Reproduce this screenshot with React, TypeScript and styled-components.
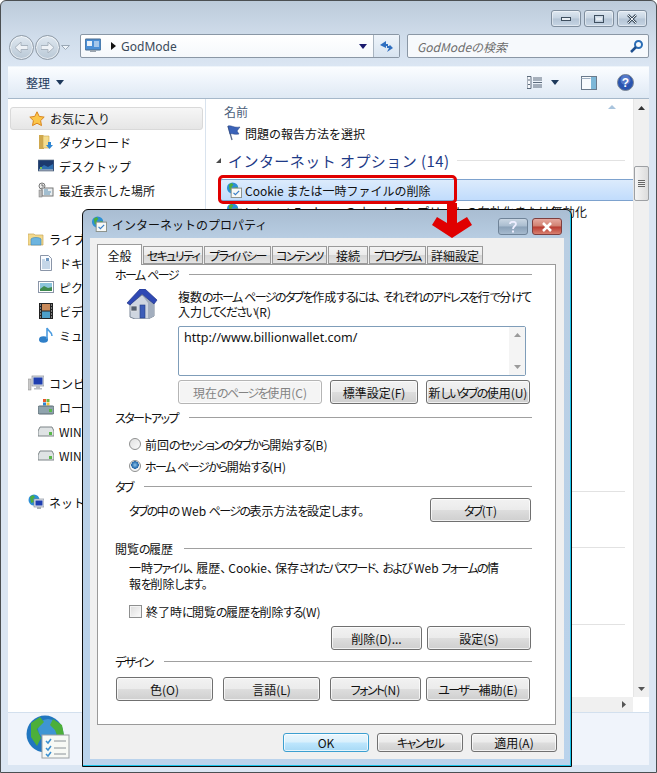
import React from 'react';
import styled, { createGlobalStyle } from 'styled-components';

const GlobalStyle = createGlobalStyle`
  html, body { margin: 0; padding: 0; background: #fff; }
  body { font-family: "Noto Sans CJK JP", "Liberation Sans", sans-serif; font-size: 12px; color: #111; }
`;

const Page = styled.div`
  position: relative;
  width: 657px;
  height: 773px;
  overflow: hidden;
`;

const ExplorerWindow = styled.div`
  box-sizing: border-box;
  width: 657px;
  height: 773px;
  border: 1px solid #4b4f52;
  border-radius: 6px 6px 0 0;
  padding: 0 7px 7px;
  display: flex;
  flex-direction: column;
  background: linear-gradient(#bccbda 0, #cfdcea 34px, #dbe6f3 66px, #dbe6f3 100%);
`;

const TitleBar = styled.div`
  height: 33px;
  flex: none;
  display: flex;
  justify-content: flex-end;
  gap: 3px;
  padding: 9px 2px 0 0;
  box-sizing: border-box;
`;

const CaptionButton = styled.div`
  width: 30px;
  height: 17px;
  box-sizing: border-box;
  border: 1px solid #7f8e9e;
  border-radius: 3px;
  display: flex;
  align-items: center;
  justify-content: center;
  background: linear-gradient(#dfe8f1 0, #c6d4e2 48%, #b4c4d5 52%, #c6d5e4 100%);
  box-shadow: inset 0 0 0 1px rgba(255, 255, 255, 0.45);
`;

const NavRow = styled.div`
  height: 32px;
  flex: none;
  display: flex;
  align-items: flex-start;
`;

const NavGroup = styled.div`
  width: 71px;
  margin-left: 1px;
  display: flex;
  align-items: center;
  height: 26px;
  gap: 1px;
`;

const NavCircle = styled.div`
  width: 25px;
  height: 25px;
  box-sizing: border-box;
  border-radius: 50%;
  border: 1px solid #8e9aa6;
  background: linear-gradient(#dfe8f0, #b9c8d6);
  box-shadow: inset 0 0 0 1px rgba(255, 255, 255, 0.6);
  display: flex;
  align-items: center;
  justify-content: center;
  flex: none;
`;

const AddressBar = styled.div`
  width: 320px;
  height: 24px;
  box-sizing: border-box;
  border: 1px solid #8a97a5;
  border-radius: 2px;
  background: linear-gradient(#fff, #f4f8fb);
  display: flex;
  align-items: center;
  padding-left: 4px;
  color: #3a4a5a;
`;

const AddressArrow = styled.span`
  margin-left: 10px;
  display: flex;
`;

const AddressText = styled.span`
  flex: 1;
  margin-left: 5px;
  font-size: 12px;
  font-family: "Noto Sans", sans-serif;
`;

const AddressEnd = styled.div`
  width: 25px;
  height: 100%;
  margin-left: 6px;
  border-left: 1px solid #a8b4c0;
  display: flex;
  align-items: center;
  justify-content: center;
  background: linear-gradient(#eef4fa, #d8e4f0);
`;

const SearchBox = styled.div`
  width: 242px;
  height: 24px;
  box-sizing: border-box;
  margin-left: 7px;
  border: 1px solid #8a97a5;
  border-radius: 2px;
  background: #f6f9fc;
  display: flex;
  align-items: center;
  justify-content: space-between;
  padding: 0 4px 0 9px;
  color: #6d6d6d;
  font-style: italic;
`;

const Toolbar = styled.div`
  height: 33px;
  flex: none;
  box-sizing: border-box;
  border-top: 1px solid #eef4fa;
  border-bottom: 1px solid #a6b8ca;
  background: linear-gradient(#fbfdff 0, #eef4fb 45%, #dfe9f4 100%);
  display: flex;
  align-items: center;
  padding: 0 15px 0 18px;
  color: #1e395b;
`;

const ToolLabel = styled.span`
  display: flex;
  align-items: center;
  gap: 6px;
  margin-right: auto;
`;

const ToolIcons = styled.div`
  display: flex;
  align-items: center;
`;

const ToolGap = styled.span<{ $w: number }>`
  width: ${p => p.$w}px;
`;

const Body = styled.div`
  flex: 1;
  min-height: 0;
  display: flex;
  background: #fff;
`;

const Sidebar = styled.div`
  width: 198px;
  flex: none;
  box-sizing: border-box;
  border-right: 1px solid #d9e3ee;
  padding: 8px 2px 0 2px;
  display: flex;
  flex-direction: column;
`;

const NavItem = styled.div<{ $sub?: boolean; $top?: number; $active?: boolean }>`
  height: ${p => (p.$active ? 23 : 24)}px;
  flex: none;
  box-sizing: border-box;
  display: flex;
  align-items: center;
  gap: 5px;
  white-space: nowrap;
  padding-left: ${p => (p.$sub ? 28 : 18)}px;
  margin-top: ${p => p.$top ?? 0}px;
  ${p =>
    p.$active
      ? `border: 1px solid #d9d9d9; border-radius: 3px; background: linear-gradient(#f6f6f6, #e6e6e6);`
      : ''}
`;

const NavIconBox = styled.span`
  width: 16px;
  height: 16px;
  flex: none;
  display: flex;
`;

const ListColumn = styled.div`
  flex: 1;
  min-width: 0;
  display: flex;
  flex-direction: column;
`;

const ListRowArea = styled.div`
  flex: 1;
  min-height: 0;
  display: flex;
`;

const List = styled.div`
  position: relative;
  flex: 1;
  min-width: 0;
  display: flex;
  flex-direction: column;
  padding-top: 5px;
`;

const SortMark = styled.div`
  position: absolute;
  top: 6px;
  left: 402px;
  width: 0;
  height: 0;
  border-left: 4px solid transparent;
  border-right: 4px solid transparent;
  border-bottom: 4px solid #a9c4dd;
`;

const ColumnHead = styled.div`
  height: 16px;
  padding-left: 18px;
  color: #4c607a;
  line-height: 16px;
`;

const FileRow = styled.div<{ $selected?: boolean; $top?: number }>`
  height: 22px;
  flex: none;
  box-sizing: border-box;
  margin: ${p => p.$top ?? 0}px 0 0 14px;
  padding-left: ${p => (p.$selected ? 5 : 6)}px;
  display: flex;
  align-items: center;
  gap: 3px;
  white-space: nowrap;
  ${p =>
    p.$selected
      ? `background: linear-gradient(#dcebfc, #c1dcfc); border: 1px solid #7da2ce; border-right: 0; border-radius: 2px 0 0 2px;`
      : ''}
`;

const WideText = styled.span`
  letter-spacing: 0.15px;
`;

const GroupHead = styled.div`
  display: flex;
  align-items: center;
  height: 22px;
  margin-top: 5px;
  padding-left: 10px;
  color: #1e3a87;
  font-size: 15px;
  letter-spacing: 0.45px;
  white-space: nowrap;
`;

const GroupArrow = styled.span`
  width: 0;
  height: 0;
  border-left: 5px solid transparent;
  border-bottom: 5px solid #4a4a4a;
  margin-right: 7px;
`;

const GroupLine = styled.span`
  flex: 1;
  height: 1px;
  background: #e2e2e2;
  margin: 0 8px 0 7px;
`;

const Divider = styled.div<{ $top: number }>`
  height: 1px;
  flex: none;
  background: #e2e2e2;
  margin: ${p => p.$top}px 8px 0 18px;
`;

const VScroll = styled.div`
  width: 16px;
  flex: none;
  background: #f0f0f0;
  display: flex;
  flex-direction: column;
  align-items: center;
  border-left: 1px solid #e6e6e6;
  box-sizing: border-box;
`;

const ScrollArrow = styled.div`
  height: 17px;
  flex: none;
  display: flex;
  align-items: center;
  justify-content: center;
`;

const Thumb = styled.div`
  width: 15px;
  height: 35px;
  margin-top: 50px;
  box-sizing: border-box;
  border: 1px solid #9da0a4;
  border-radius: 2px;
  background: linear-gradient(90deg, #f5f5f5, #dcdcdc);
  display: flex;
  align-items: center;
  justify-content: center;
`;

const Grip = styled.div`
  width: 7px;
  height: 7px;
  background: repeating-linear-gradient(#666 0 1px, #eee 1px 2px);
`;

const ScrollFill = styled.div`
  flex: 1;
`;

const HScroll = styled.div`
  height: 15px;
  flex: none;
  display: flex;
`;

const HTrack = styled.div`
  flex: 1;
  background: #f0f0f0;
  display: flex;
  align-items: center;
  justify-content: flex-end;
  padding-right: 7px;
`;

const ScrollCorner = styled.div`
  width: 16px;
  background: #fff;
`;

const DetailsPane = styled.div`
  height: 53px;
  flex: none;
  box-sizing: border-box;
  border-top: 1px solid #d3e0ee;
  background: #f0f4fb;
  padding: 2px 0 0 18px;
`;

const Highlight = styled.div`
  position: absolute;
  left: 218px;
  top: 175px;
  width: 239px;
  height: 29px;
  box-sizing: border-box;
  border: 3px solid #e00000;
  border-radius: 5px;
`;

const ArrowMark = styled.svg`
  position: absolute;
  left: 431px;
  top: 203px;
  z-index: 3;
`;

/* internet properties dialog */
const Dialog = styled.div`
  position: absolute;
  left: 82px;
  top: 209px;
  z-index: 2;
  width: 490px;
  height: 558px;
  box-sizing: border-box;
  border: 1px solid #0c0c0c;
  border-radius: 6px 6px 0 0;
  padding: 0 7px 7px;
  display: flex;
  flex-direction: column;
  background: linear-gradient(#a9bdd2 0, #b9cee3 30px, #bad3ec 100%);
  box-shadow: inset -1px -1px 0 #19c4ea;
`;

const DialogTitle = styled.div`
  height: 28px;
  flex: none;
  display: flex;
  align-items: center;
  gap: 5px;
  padding-left: 1px;
`;

const DialogTitleText = styled.span`
  flex: 1;
  font-size: 12px;
  margin-top: 1px;
`;

const DialogCaption = styled.div<{ $close?: boolean }>`
  width: 30px;
  height: 17px;
  align-self: flex-start;
  margin-top: 8px;
  margin-right: ${p => (p.$close ? 2 : -1)}px;
  box-sizing: border-box;
  border: 1px solid ${p => (p.$close ? '#7e3f3f' : '#6f8398')};
  border-radius: 3px;
  display: flex;
  align-items: center;
  justify-content: center;
  background: ${p =>
    p.$close
      ? 'linear-gradient(#e6a9a0 0, #d08070 48%, #b83a30 52%, #d88070 100%)'
      : 'linear-gradient(#c9d6e3 0, #a9bccf 48%, #8aa1b8 52%, #a6bace 100%)'};
`;

const Client = styled.div`
  flex: 1;
  min-height: 0;
  background: #f0f0f0;
  padding: 6px 8px 0 7px;
  display: flex;
  flex-direction: column;
`;

const TabStrip = styled.div`
  display: flex;
  height: 20px;
  flex: none;
  align-items: flex-end;
  position: relative;
  z-index: 1;
  gap: 1px;
`;

const Tab = styled.div<{ $w: number; $active?: boolean }>`
  width: ${p => p.$w}px;
  height: ${p => (p.$active ? 21 : 18)}px;
  margin-bottom: ${p => (p.$active ? -1 : 0)}px;
  box-sizing: border-box;
  border: 1px solid #9a9a9a;
  border-bottom: ${p => (p.$active ? 0 : '1px solid #9a9a9a')};
  background: ${p => (p.$active ? '#fff' : 'linear-gradient(#f3f3f3 0, #ebebeb 48%, #d6d6d6 52%, #e2e2e2 100%)')};
  display: flex;
  align-items: center;
  justify-content: center;
  white-space: nowrap;
  font-size: 12px;
`;

const Panel = styled.div`
  height: 461px;
  flex: none;
  box-sizing: border-box;
  border: 1px solid #9a9a9a;
  background: #fff;
  padding: 1px 24px 0 18px;
  display: flex;
  flex-direction: column;
`;

const Kana = styled.span`
  letter-spacing: -1.6px;
  font-feature-settings: "palt";
`;

const Punct = styled.span`
  letter-spacing: -4px;
`;

const SectionHead = styled.div<{ $top?: number }>`
  height: 16px;
  flex: none;
  margin: ${p => p.$top ?? 0}px -1px 0;
  display: flex;
  align-items: center;
  gap: 11px;
  white-space: nowrap;
  &::after {
    content: '';
    flex: 1;
    height: 1px;
    background: #a0a0a0;
  }
`;

const HomeRow = styled.div`
  display: flex;
  margin-top: 7px;
`;

const HouseBox = styled.div`
  width: 62px;
  flex: none;
  padding-left: 10px;
  box-sizing: border-box;
`;

const HomeColumn = styled.div`
  flex: 1;
  min-width: 0;
  display: flex;
  flex-direction: column;
`;

const HelpLine = styled.div<{ $indent?: boolean }>`
  line-height: ${p => (p.$indent ? 16 : 15)}px;
  padding-left: ${p => (p.$indent ? 13 : 0)}px;
  white-space: nowrap;
`;

const HelpBlock = styled.div<{ $top?: number }>`
  margin-top: ${p => p.$top ?? 0}px;
`;

const UrlBox = styled.div`
  height: 50px;
  width: 348px;
  margin-top: 7px;
  box-sizing: border-box;
  border: 1px solid #7f9db9;
  border-radius: 2px;
  padding: 2px 0 0 5px;
  display: flex;
  justify-content: space-between;
  font-family: "Noto Sans", sans-serif;
  font-size: 12.5px;
  line-height: 17px;
`;

const UrlScroll = styled.div`
  width: 16px;
  background: #f4f4f4;
  margin-top: -2px;
  display: flex;
  flex-direction: column;
  justify-content: space-between;
  align-items: center;
  padding: 6px 0;
  box-sizing: border-box;
`;

const ButtonRow = styled.div<{ $top?: number; $end?: boolean; $gap?: number }>`
  display: flex;
  justify-content: ${p => (p.$end ? 'flex-end' : 'flex-start')};
  gap: ${p => p.$gap ?? 8}px;
  margin-top: ${p => p.$top ?? 0}px;
`;

const PushButton = styled.div<{ $w: number; $disabled?: boolean; $default?: boolean; $short?: boolean }>`
  width: ${p => p.$w}px;
  height: ${p => (p.$short ? 19 : 24)}px;
  flex: none;
  box-sizing: border-box;
  border: 1px solid ${p => (p.$disabled ? '#b5b5b5' : p.$default ? '#3c9fd0' : '#707070')};
  border-radius: 3px;
  display: flex;
  align-items: center;
  justify-content: center;
  white-space: pre;
  color: ${p => (p.$disabled ? '#838383' : '#111')};
  background: ${p =>
    p.$disabled
      ? '#f4f4f4'
      : p.$default
      ? 'linear-gradient(#eaf6fd 0, #d9f0fc 48%, #bee6fd 52%, #a7d9f5 100%)'
      : 'linear-gradient(#f2f2f2 0, #ebebeb 48%, #dddddd 52%, #cfcfcf 100%)'};
  box-shadow: inset 0 0 0 1px rgba(255, 255, 255, 0.7);
`;

const OptionRow = styled.div<{ $top?: number; $h?: number }>`
  height: ${p => p.$h ?? 22}px;
  margin-top: ${p => p.$top ?? 0}px;
  padding-left: 13px;
  display: flex;
  align-items: center;
  gap: 4px;
  white-space: nowrap;
`;

const Radio = styled.span<{ $on?: boolean }>`
  width: 12px;
  height: 12px;
  box-sizing: border-box;
  border-radius: 50%;
  border: 1px solid #8e8f8f;
  background: ${p =>
    p.$on
      ? 'radial-gradient(circle at 50% 40%, #8fc4ea 0, #1e64a8 3.5px, #f4f4f4 4px)'
      : 'linear-gradient(135deg, #e0e0e0, #fbfbfb)'};
`;

const CheckBox = styled.span`
  width: 13px;
  height: 13px;
  box-sizing: border-box;
  border: 1px solid #8e8f8f;
  background: linear-gradient(135deg, #dcdcdc, #fdfdfd);
  box-shadow: inset 0 0 0 1px #f4f4f4;
`;

const TabInfoRow = styled.div`
  display: flex;
  align-items: center;
  justify-content: space-between;
  margin-top: 4px;
  padding-left: 13px;
`;

const DesignRow = styled(ButtonRow)`
  & > div:last-child {
    margin-left: -5px;
  }
`;

const DialogFooter = styled.div`
  margin-top: 8px;
  margin-right: -1px;
  display: flex;
  justify-content: flex-end;
  gap: 8px;
`;

/* dialog text: narrow kana and punctuation, full width kanji and latin */
const Fit = ({ children }: { children: string }) => (
  <span>
    {children.split(/([\u3040-\u30ff]+|[\u3001\u3002])/).map((run, i) => {
      if (i % 2 === 0) return run;
      return run === '、' || run === '。' ? <Punct key={i}>{run}</Punct> : <Kana key={i}>{run}</Kana>;
    })}
  </span>
);

/* drawn icons */
const Star = () => (
  <svg width="16" height="16" viewBox="0 0 16 16">
    <path d="M8 .8l2.2 4.6 5 .7-3.6 3.5.9 5L8 12.2l-4.5 2.4.9-5L.8 6.1l5-.7z" fill="#fbc64a" stroke="#d9851e" strokeWidth="1" />
  </svg>
);
const FolderDown = () => (
  <svg width="16" height="16" viewBox="0 0 16 16">
    <path d="M1 1h4l1 1v13H1z" fill="#cfa84e" />
    <path d="M5 2h6v12H5z" fill="#f5dd8e" stroke="#c9a54e" strokeWidth=".6" />
    <path d="M10 8h3v3h2l-3.5 4L8 11h2z" fill="#2f86d2" />
  </svg>
);
const DesktopIcon = () => (
  <svg width="16" height="16" viewBox="0 0 16 16">
    <rect x="0" y="2" width="16" height="11" fill="#1c3a6e" stroke="#66788c" strokeWidth=".7" />
    <path d="M1 11l5-4 4 2 5-3v6H1z" fill="#2f6fb0" />
    <rect x="1" y="11.5" width="14" height="1" fill="#ccc" />
    <rect x="2" y="9" width="2" height="2" fill="#7fc04e" />
  </svg>
);
const RecentIcon = () => (
  <svg width="16" height="16" viewBox="0 0 16 16">
    <circle cx="4" cy="4" r="3" fill="#eee" stroke="#777" />
    <path d="M4 2v2h2" stroke="#444" fill="none" strokeWidth=".7" />
    <rect x="4" y="6" width="11" height="8" fill="#e8edf0" stroke="#777" />
    <path d="M6 8h4M6 10h7M6 12h6" stroke="#5c8fb0" />
    <rect x="1" y="8" width="3" height="7" fill="#bbb" stroke="#777" strokeWidth=".5" />
  </svg>
);
const LibraryIcon = () => (
  <svg width="16" height="16" viewBox="0 0 16 16">
    <path d="M0 3h6l1 1h8v10H0z" fill="#f3d98c" stroke="#c7a75a" strokeWidth=".7" />
    <path d="M3 8c1-2 9-2 10 0v6H3z" fill="#6cb4df" stroke="#3f88b8" strokeWidth=".6" />
  </svg>
);
const DocIcon = () => (
  <svg width="16" height="16" viewBox="0 0 16 16">
    <path d="M2.5.5h8l3 3v12h-11z" fill="#fafcff" stroke="#8a95a8" />
    <path d="M4 5h3M4 7h8M4 9h8M4 11h8M4 13h8" stroke="#8fb0d0" />
    <rect x="8" y="3" width="3" height="3" fill="#6f97c0" />
  </svg>
);
const PictureIcon = () => (
  <svg width="16" height="16" viewBox="0 0 16 16">
    <rect x=".5" y="2.5" width="15" height="11" fill="#fff" stroke="#8a95a8" />
    <rect x="2" y="4" width="12" height="8" fill="#8cc4dc" />
    <path d="M2 10l4-3 4 2 4-1v4H2z" fill="#3f8a4e" />
  </svg>
);
const VideoIcon = () => (
  <svg width="16" height="16" viewBox="0 0 16 16">
    <rect x="1" y="0" width="14" height="16" fill="#222" />
    <rect x="4" y="1" width="8" height="6.5" fill="#c98a5a" />
    <rect x="4" y="8.5" width="8" height="6.5" fill="#4d9fc9" />
    <path d="M2 2h1M2 5h1M2 8h1M2 11h1M2 14h1M13 2h1M13 5h1M13 8h1M13 11h1M13 14h1" stroke="#ddd" />
  </svg>
);
const MusicIcon = () => (
  <svg width="16" height="16" viewBox="0 0 16 16">
    <ellipse cx="5.5" cy="12.5" rx="4.5" ry="3.2" fill="#2f7fc8" />
    <path d="M9 12V1c.5 3 5 3 5 8" stroke="#4c9ce0" strokeWidth="1.6" fill="none" />
  </svg>
);
const ComputerIcon = () => (
  <svg width="16" height="16" viewBox="0 0 16 16">
    <rect x="0" y="4" width="3" height="11" fill="#c9c9c9" stroke="#888" strokeWidth=".5" />
    <rect x="4" y="1" width="12" height="10" fill="#d8dce2" stroke="#8a8f98" strokeWidth=".7" />
    <rect x="5.5" y="2.5" width="9" height="7" fill="#1f3fb0" />
    <path d="M8 11h4v2h2v1.500H6V13h2z" fill="#b8bcc2" />
  </svg>
);
const LocalDiskIcon = () => (
  <svg width="16" height="16" viewBox="0 0 16 16">
    <rect x="5" y="0" width="3" height="3" fill="#e8562a" />
    <rect x="8.500" y="0" width="3" height="3" fill="#6cb33f" />
    <rect x="5" y="3.500" width="3" height="3" fill="#2f86d2" />
    <rect x="8.500" y="3.500" width="3" height="3" fill="#f5c63a" />
    <rect x="0" y="7" width="16" height="8" rx="1.500" fill="#8fa3ad" stroke="#5a6a72" />
    <rect x="11" y="10" width="3" height="3" fill="#59b84a" />
  </svg>
);
const DriveIcon = () => (
  <svg width="16" height="16" viewBox="0 0 16 16">
    <path d="M2 4h12l2 4v5H0V8z" fill="#dfe3e4" stroke="#7c8487" />
    <rect x="11" y="9" width="3" height="3" fill="#59b84a" />
  </svg>
);
const GlobeSmall = () => (
  <svg width="16" height="16" viewBox="0 0 16 16">
    <circle cx="6" cy="6" r="5.500" fill="#2c8fd6" />
    <path d="M2 3l3-2 2 2-2 2 1 3-3 1zM8 6l3-1v3l-2 1z" fill="#4cae3c" />
    <rect x="6" y="5" width="10" height="8" fill="#dfe3ea" stroke="#7a8290" strokeWidth=".6" />
    <rect x="7.500" y="6.500" width="7" height="5" fill="#1f3fb0" />
    <path d="M9 13h4v2H9z" fill="#a8adb4" />
  </svg>
);
const FlagIcon = () => (
  <svg width="16" height="16" viewBox="0 0 16 16">
    <path d="M2 1l4 14" stroke="#5a6a8a" strokeWidth="1.300" />
    <path d="M2 1c4-1 5 2 12 1l-3 4 2 3c-5 1-7-1-9 0z" fill="#3a62b8" stroke="#24407e" strokeWidth=".5" />
  </svg>
);
const GlobeCheck = () => (
  <svg width="16" height="16" viewBox="0 0 17 17">
    <circle cx="7" cy="6.500" r="6" fill="#2c8fd6" />
    <path d="M3 3l3-2 2 2-2 2 1 3-3 1zM9 6l3-1v3l-2 1z" fill="#4cae3c" />
    <rect x="5.500" y="6.500" width="11" height="10" fill="#f8f9f6" stroke="#8a8f88" />
    <path d="M8 11.500l2 2 4-4" stroke="#3a7fc8" strokeWidth="1.300" fill="none" />
  </svg>
);
const GlobeList = ({ size }: { size: number }) => (
  <svg width={size} height={size} viewBox="0 0 44 44">
    <circle cx="19" cy="19" r="18.500" fill="#2176c0" />
    <circle cx="22" cy="14" r="10" fill="#4ba3dc" opacity=".7" />
    <path d="M5 8l9-6 4 5-7 7 4 9-4 8-6-9zM27 4l9 6 2 10-6 3-3-8-5-5zM26 27l7-2-2 9-6 2z" fill="#4caf3a" />
    <rect x="16" y="20" width="27" height="23" fill="#f7f9f5" stroke="#9aa0a4" />
    <path d="M20 26l2 2 3-4M20 33l2 2 3-4M20 39l2 2 3-4" stroke="#3a8fd0" strokeWidth="1.500" fill="none" />
    <path d="M28 26h12M28 33h12M28 39h12" stroke="#8a9298" />
  </svg>
);
const HouseIcon = () => (
  <svg width="32" height="30" viewBox="0 0 32 30">
    <path d="M4 15l12-9 12 9v12l-6 3H9l-5-2z" fill="#cfd6e0" stroke="#7b8696" />
    <path d="M16 6l12 9v12l-6 3V14z" fill="#a3aebe" />
    <path d="M1 14L14 0h5l12 11-3 4L16 5 4 16z" fill="#2f49b4" stroke="#1f3486" strokeWidth=".7" />
    <rect x="5" y="17" width="6" height="5" fill="#55606e" stroke="#e6e6e6" strokeWidth=".7" />
    <rect x="14" y="16" width="5" height="13" fill="#3c5db8" stroke="#223c80" strokeWidth=".6" />
  </svg>
);
const CplIcon = () => (
  <svg width="16" height="16" viewBox="0 0 16 16">
    <rect x="0" y="1" width="16" height="11" rx="1" fill="#4a8fd6" stroke="#4a6a8a" />
    <rect x="2" y="3" width="5" height="5" fill="#e8f0f8" />
    <path d="M9 4h5M9 6h5M9 8h5" stroke="#fff" />
    <path d="M5 12h6v2H5z" fill="#9aa4ae" />
  </svg>
);
const Search = () => (
  <svg width="15" height="15" viewBox="0 0 15 15">
    <circle cx="9.500" cy="5.500" r="3.500" fill="none" stroke="#2a6db5" strokeWidth="2" />
    <path d="M7 8l-5 5" stroke="#1f4f8e" strokeWidth="2.500" />
  </svg>
);
const Refresh = () => (
  <svg width="15" height="13" viewBox="0 0 15 13">
    <path d="M7 1L1 5l6 3V6h2V4H7z" fill="#2f6fc0" />
    <path d="M8 12l6-4-3-3-1 1H8v2h2z" fill="#2f6fc0" />
  </svg>
);
const ViewIcon = () => (
  <svg width="15" height="13" viewBox="0 0 15 13">
    <path d="M0 .5h4v12H0zM6 2h9M6 4h9M6 6.500h9M6 9h9M6 11h9" fill="#f6f8fb" stroke="#5c6b7c" />
    <path d="M1 4h2M1 8.500h2" stroke="#5c6b7c" />
  </svg>
);
const PaneIcon = () => (
  <svg width="16" height="14" viewBox="0 0 16 14">
    <rect x=".5" y=".5" width="15" height="13" fill="#f8fbfe" stroke="#6a7a8c" />
    <rect x="10" y="1" width="5" height="12" fill="#7cb7d8" />
    <path d="M.5 2.500h9" stroke="#9fb0c2" />
  </svg>
);
const HelpIcon = () => (
  <svg width="17" height="17" viewBox="0 0 17 17">
    <circle cx="8.500" cy="8.500" r="8" fill="#2a55b0" stroke="#7c8794" />
    <circle cx="8.500" cy="6" r="5" fill="#6f90d8" opacity=".6" />
    <text x="8.500" y="13" textAnchor="middle" fontSize="12" fontWeight="700" fill="#fff" fontFamily="Liberation Sans">?</text>
  </svg>
);
const Caret = ({ color = '#1e395b' }: { color?: string }) => (
  <svg width="8" height="5" viewBox="0 0 8 5">
    <path d="M0 0h8L4 5z" fill={color} />
  </svg>
);
const TinyUp = ({ color }: { color: string }) => (
  <svg width="7" height="4"><path d="M0 4h7L3.500 0z" fill={color} /></svg>
);
const TinyDown = ({ color }: { color: string }) => (
  <svg width="7" height="4"><path d="M0 0h7L3.500 4z" fill={color} /></svg>
);

const App: React.FC = () => {
  return (
    <Page>
      <GlobalStyle />
      <ExplorerWindow>
        <TitleBar>
          <CaptionButton>
            <svg width="10" height="4"><rect x=".5" y=".5" width="9" height="3" fill="#e8eef4" stroke="#3f4f5f" /></svg>
          </CaptionButton>
          <CaptionButton>
            <svg width="10" height="8"><rect x=".5" y=".5" width="9" height="7" fill="none" stroke="#3f4f5f" strokeWidth="1" /><rect x="2" y="2.500" width="6" height="3" fill="#e8eef4" /></svg>
          </CaptionButton>
          <CaptionButton>
            <svg width="12" height="10"><path d="M2 1l8 8M10 1L2 9" stroke="#3f4f5f" strokeWidth="2.500" /><path d="M2 1l8 8M10 1L2 9" stroke="#eef2f6" strokeWidth="1" /></svg>
          </CaptionButton>
        </TitleBar>
        <NavRow>
          <NavGroup>
            <NavCircle>
              <svg width="13" height="11"><path d="M6 0L0 5.500 6 11V7.500h7v-4H6z" fill="#eef2f6" stroke="#a9b4bf" /></svg>
            </NavCircle>
            <NavCircle>
              <svg width="13" height="11"><path d="M7 0l6 5.500L7 11V7.500H0v-4h7z" fill="#eef2f6" stroke="#a9b4bf" /></svg>
            </NavCircle>
            <svg width="9" height="5"><path d="M.5.500h8L4.500 4.500z" fill="#eef4fa" stroke="#9aa8b6" /></svg>
          </NavGroup>
          <AddressBar>
            <CplIcon />
            <AddressArrow>
              <svg width="5" height="8"><path d="M0 0l5 4-5 4z" fill="#111" /></svg>
            </AddressArrow>
            <AddressText>GodMode</AddressText>
            <Caret color="#1a1a6e" />
            <AddressEnd><Refresh /></AddressEnd>
          </AddressBar>
          <SearchBox>
            <span>GodModeの検索</span>
            <Search />
          </SearchBox>
        </NavRow>
        <Toolbar>
          <ToolLabel>整理 <Caret /></ToolLabel>
          <ToolIcons>
            <ViewIcon />
            <ToolGap $w={9} />
            <Caret />
            <ToolGap $w={22} />
            <PaneIcon />
            <ToolGap $w={20} />
            <HelpIcon />
          </ToolIcons>
        </Toolbar>
        <Body>
          <Sidebar>
            <NavItem $active><NavIconBox><Star /></NavIconBox>お気に入り</NavItem>
            <NavItem $sub><NavIconBox><FolderDown /></NavIconBox>ダウンロード</NavItem>
            <NavItem $sub><NavIconBox><DesktopIcon /></NavIconBox>デスクトップ</NavItem>
            <NavItem $sub><NavIconBox><RecentIcon /></NavIconBox>最近表示した場所</NavItem>
            <NavItem $top={25}><NavIconBox><LibraryIcon /></NavIconBox>ライブラリ</NavItem>
            <NavItem $sub><NavIconBox><DocIcon /></NavIconBox>ドキュメント</NavItem>
            <NavItem $sub><NavIconBox><PictureIcon /></NavIconBox>ピクチャ</NavItem>
            <NavItem $sub><NavIconBox><VideoIcon /></NavIconBox>ビデオ</NavItem>
            <NavItem $sub><NavIconBox><MusicIcon /></NavIconBox>ミュージック</NavItem>
            <NavItem $top={24}><NavIconBox><ComputerIcon /></NavIconBox>コンピューター</NavItem>
            <NavItem $sub><NavIconBox><LocalDiskIcon /></NavIconBox>ローカル ディスク</NavItem>
            <NavItem $sub><NavIconBox><DriveIcon /></NavIconBox>WIN</NavItem>
            <NavItem $sub><NavIconBox><DriveIcon /></NavIconBox>WIN</NavItem>
            <NavItem $top={23}><NavIconBox><GlobeSmall /></NavIconBox>ネットワーク</NavItem>
          </Sidebar>
          <ListColumn>
            <ListRowArea>
              <List>
                <SortMark />
                <ColumnHead>名前</ColumnHead>
                <FileRow $top={2}><FlagIcon />問題の報告方法を選択</FileRow>
                <GroupHead>
                  <GroupArrow />
                  インターネット オプション (14)
                  <GroupLine />
                </GroupHead>
                <FileRow $selected $top={8}><GlobeCheck />Cookie または一時ファイルの削除</FileRow>
                <FileRow $top={-1}><GlobeCheck /><WideText>Internet Explorer のオートコンプリートの有効化または無効化</WideText></FileRow>
                <Divider $top={269} />
                <Divider $top={55} />
                <Divider $top={76} />
              </List>
              <VScroll>
                <ScrollArrow><TinyUp color="#333" /></ScrollArrow>
                <Thumb><Grip /></Thumb>
                <ScrollFill />
                <ScrollArrow><TinyDown color="#555" /></ScrollArrow>
              </VScroll>
            </ListRowArea>
            <HScroll>
              <HTrack>
                <svg width="4" height="7"><path d="M0 0l4 3.500L0 7z" fill="#555" /></svg>
              </HTrack>
              <ScrollCorner />
            </HScroll>
          </ListColumn>
        </Body>
        <DetailsPane>
          <GlobeList size={44} />
        </DetailsPane>
      </ExplorerWindow>

      <Highlight />
      <ArrowMark width="42" height="35" viewBox="0 0 42 35">
        <path d="M16 0h10v20l10-6 5 8-20 13L1 22l5-8 10 6z" fill="#e00000" />
      </ArrowMark>

      <Dialog>
        <DialogTitle>
          <GlobeCheck />
          <DialogTitleText>インターネットのプロパティ</DialogTitleText>
          <DialogCaption><svg width="10" height="12"><path d="M2 3c0-3 6-3 6 0 0 2-3 2-3 5" stroke="#eef" strokeWidth="1.800" fill="none" /><rect x="4" y="9.500" width="2" height="2" fill="#eef" /></svg></DialogCaption>
          <DialogCaption $close><svg width="12" height="10"><path d="M2 1l8 8M10 1L2 9" stroke="#fff" strokeWidth="2.500" /></svg></DialogCaption>
        </DialogTitle>
        <Client>
          <TabStrip>
            <Tab $w={45} $active>全般</Tab>
            <Tab $w={60}><Fit>セキュリティ</Fit></Tab>
            <Tab $w={67}><Fit>プライバシー</Fit></Tab>
            <Tab $w={55}><Fit>コンテンツ</Fit></Tab>
            <Tab $w={40}>接続</Tab>
            <Tab $w={57}><Fit>プログラム</Fit></Tab>
            <Tab $w={56}>詳細設定</Tab>
          </TabStrip>
          <Panel>
            <SectionHead><Fit>ホーム ページ</Fit></SectionHead>
            <HomeRow>
              <HouseBox><HouseIcon /></HouseBox>
              <HomeColumn>
                <HelpBlock>
                  <HelpLine><Fit>複数のホーム ページのタブを作成するには、それぞれのアドレスを行で分けて</Fit></HelpLine>
                  <HelpLine><Fit>入力してください(R)</Fit></HelpLine>
                </HelpBlock>
                <UrlBox>
                  http://www.billionwallet.com/
                  <UrlScroll><TinyUp color="#9a9a9a" /><TinyDown color="#9a9a9a" /></UrlScroll>
                </UrlBox>
                <ButtonRow $top={4}>
                  <PushButton $w={144} $disabled><Fit>現在のページを使用(C)</Fit></PushButton>
                  <PushButton $w={88}>標準設定(F)</PushButton>
                  <PushButton $w={104}><Fit>新しいタブの使用(U)</Fit></PushButton>
                </ButtonRow>
              </HomeColumn>
            </HomeRow>

            <SectionHead $top={5}><Fit>スタートアップ</Fit></SectionHead>
            <OptionRow $top={8}><Radio /><Fit>前回のセッションのタブから開始する(B)</Fit></OptionRow>
            <OptionRow><Radio $on /><Fit>ホーム ページから開始する(H)</Fit></OptionRow>

            <SectionHead $top={1}><Fit>タブ</Fit></SectionHead>
            <TabInfoRow>
              <Fit>タブの中の Web ページの表示方法を設定します。</Fit>
              <PushButton $w={101}><Fit>タブ(T)</Fit></PushButton>
            </TabInfoRow>

            <SectionHead $top={18}><Fit>閲覧の履歴</Fit></SectionHead>
            <HelpBlock $top={4}>
              <HelpLine $indent><Fit>一時ファイル、履歴、Cookie、保存されたパスワード、および Web フォームの情</Fit></HelpLine>
              <HelpLine $indent><Fit>報を削除します。</Fit></HelpLine>
            </HelpBlock>
            <OptionRow $top={11} $h={16}><CheckBox /><Fit>終了時に閲覧の履歴を削除する(W)</Fit></OptionRow>
            <ButtonRow $top={7} $end $gap={5}>
              <PushButton $w={91}>削除(D)...</PushButton>
              <PushButton $w={104}>設定(S)</PushButton>
            </ButtonRow>

            <SectionHead $top={3}><Fit>デザイン</Fit></SectionHead>
            <DesignRow $top={8} $gap={10}>
              <PushButton $w={97}>色(O)</PushButton>
              <PushButton $w={97}>言語(L)</PushButton>
              <PushButton $w={91}><Fit>フォント(N)</Fit></PushButton>
              <PushButton $w={104}><Fit>ユーザー補助(E)</Fit></PushButton>
            </DesignRow>
          </Panel>
          <DialogFooter>
            <PushButton $w={86} $short $default>OK</PushButton>
            <PushButton $w={86} $short><Fit>キャンセル</Fit></PushButton>
            <PushButton $w={86} $short>適用(A)</PushButton>
          </DialogFooter>
        </Client>
      </Dialog>
    </Page>
  );
};

export default App;
